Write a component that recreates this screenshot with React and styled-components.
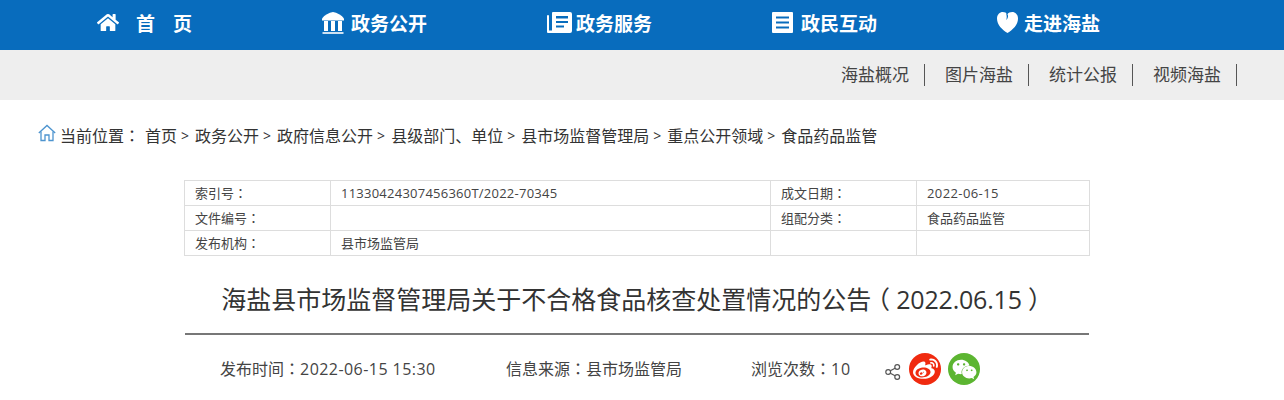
import React from 'react';
import styled, { createGlobalStyle } from 'styled-components';
import { FaHome, FaWeibo, FaWeixin } from 'react-icons/fa';

const FONT = '"Open Sans", "Noto Sans CJK SC", sans-serif';

const GlobalStyle = createGlobalStyle`
  html, body {
    margin: 0;
    padding: 0;
    background: #fff;
    overflow: hidden;
  }
  body {
    font-family: ${FONT};
    color: #333;
  }
`;

const MainNav = styled.nav`
  height: 50px;
  background: #086cbd;
  display: flex;
  padding-left: 97px;
`;

const NavItem = styled.a`
  width: 225px;
  height: 46px;
  display: flex;
  align-items: center;
  color: #fff;
  font-size: 19px;
  font-weight: 700;
`;

const NavIcon = styled.span`
  display: flex;
  width: ${(p) => p.$width}px;
  margin-right: ${(p) => p.$gap}px;
  margin-top: -1px;

  svg {
    display: block;
  }
`;

const HomeLabel = styled.span`
  width: 56px;
  display: flex;
  justify-content: space-between;
`;

const SubNav = styled.div`
  height: 50px;
  background: #eee;
  display: flex;
  justify-content: flex-end;
  align-items: center;
  padding-right: 47px;
`;

const SubLink = styled.a`
  height: 22px;
  line-height: 22px;
  padding: 0 15px 0 20px;
  border-right: 1px solid #555;
  font-size: 17px;
  color: #444;
`;

const Crumbs = styled.div`
  height: 70px;
  padding-bottom: 10px;
  display: flex;
  align-items: center;
  padding-left: 38px;
  font-size: 16px;
  color: #333;
`;

const CrumbHome = styled.svg`
  width: 18px;
  height: 18px;
  margin-right: 4px;
  margin-top: -4px;
`;

const CrumbLabel = styled.span`
  margin-right: 5px;
`;

const CrumbLink = styled.a`
  color: #333;
`;

const CrumbSep = styled.span`
  font-size: 14px;
  margin: 0 6px 0 4px;
`;

// centred full-width punctuation, as the reference's system font draws it
const Punct = styled.span`
  font-family: "Noto Sans CJK TC", sans-serif;
`;

const Num = styled.span`
  letter-spacing: ${(p) => p.$spacing}px;
`;

const Article = styled.main`
  width: 906px;
  margin-left: 184px;
`;

const MetaTable = styled.table`
  width: 905px;
  border-collapse: collapse;
  table-layout: fixed;
  font-size: 13px;
  color: #444;

  td {
    height: 24px;
    padding: 0 0 0 10px;
    border: 1px solid #ddd;
    line-height: 24px;
  }
`;

const Title = styled.h1`
  margin: 0 1px;
  padding: 25px 6px 0 0;
  height: 79px;
  box-sizing: border-box;
  border-bottom: 2px solid #777;
  text-align: center;
  font-size: 25px;
  line-height: 36px;
  font-weight: 400;
  color: #333;
  white-space: nowrap;
`;

// half-width glyph in a full-width box, so the bracket sits in the middle
const TitleParen = styled.span`
  display: inline-block;
  width: 25px;
  text-align: center;
  font-feature-settings: "halt";
`;

const InfoRow = styled.div`
  display: flex;
  align-items: center;
  height: 68px;
  padding-left: 36px;
  font-size: 16px;
  color: #444;
`;

const InfoText = styled.span`
  width: ${(p) => p.$width}px;
  margin-top: -2px;
`;

const ShareGlyph = styled.svg`
  width: 16px;
  height: 16px;
  margin-right: 8px;
  margin-top: 6px;
`;

const Badge = styled.span`
  width: 32px;
  height: 32px;
  border-radius: 50%;
  background: ${(p) => p.$bg};
  margin-right: 7px;
  display: flex;
  align-items: center;
  justify-content: center;
  color: #fff;
  font-size: 25px;
`;

const BankIcon = () => (
  <svg width="22" height="22" viewBox="0 0 22 22" fill="#fff">
    <path d="M11 0 C15 0.5 19.5 3 22 6.5 V8.5 H0 V6.5 C2.5 3 7 0.5 11 0 Z" />
    <rect x="2" y="9" width="4" height="10" />
    <rect x="9" y="9" width="4" height="10" />
    <rect x="16" y="9" width="4" height="10" />
    <rect x="0.5" y="20" width="21" height="2" opacity="0.8" />
  </svg>
);

const ServiceIcon = () => (
  <svg width="25" height="21" viewBox="0 0 25 21" fill="#fff">
    <rect x="0" y="3" width="2" height="18" rx="1" />
    <path
      d="M6 0 H23 Q25 0 25 2 V19 Q25 21 23 21 H1 V18.5 H5 V1 Q5 0 6 0 Z M9 4 V6.5 H21 V4 Z M9 9 V11 H21 V9 Z M9 13.5 V15.5 H17 V13.5 Z"
      fillRule="evenodd"
    />
  </svg>
);

const ListIcon = () => (
  <svg width="21" height="21" viewBox="0 0 21 21" fill="#fff">
    <path d="M1 0 H20 Q21 0 21 1 V20 Q21 21 20 21 H1 Q0 21 0 20 V1 Q0 0 1 0 Z M4 4.5 V6.5 H17 V4.5 Z M4 9.5 V11.5 H17 V9.5 Z M4 14.5 V16.5 H17 V14.5 Z" fillRule="evenodd" />
  </svg>
);

const HeartIcon = () => (
  <svg width="21" height="21" viewBox="0 0 21 21">
    <path fill="#fff" d="M10.5 21 C5 17.5 0 13 0 6.5 C0 2.5 2.8 0 5.8 0 C7.8 0 9.3 0.8 10.2 2.4 C11.4 0.8 13.2 0 15.2 0 C18.2 0 21 2.5 21 6.5 C21 13 16 17.5 10.5 21 Z" />
    <path fill="#086cbd" d="M10.2 2 C11.6 3.6 11.4 6 9.2 8 C10 5.8 9.9 4 9 1 Z" />
  </svg>
);

const crumbs = ['首页', '政务公开', '政府信息公开', '县级部门、单位', '县市场监督管理局', '重点公开领域', '食品药品监管'];

const App = () => (
  <>
    <GlobalStyle />
    <MainNav>
      <NavItem>
        <NavIcon $width={22} $gap={17}><FaHome size={23} color="#fff" /></NavIcon>
        <HomeLabel><span>首</span><span>页</span></HomeLabel>
      </NavItem>
      <NavItem><NavIcon $width={22} $gap={7}><BankIcon /></NavIcon>政务公开</NavItem>
      <NavItem><NavIcon $width={25} $gap={4}><ServiceIcon /></NavIcon>政务服务</NavItem>
      <NavItem><NavIcon $width={21} $gap={8}><ListIcon /></NavIcon>政民互动</NavItem>
      <NavItem><NavIcon $width={21} $gap={6}><HeartIcon /></NavIcon>走进海盐</NavItem>
    </MainNav>
    <SubNav>
      <SubLink>海盐概况</SubLink>
      <SubLink>图片海盐</SubLink>
      <SubLink>统计公报</SubLink>
      <SubLink>视频海盐</SubLink>
    </SubNav>
    <Crumbs>
      <CrumbHome viewBox="0 0 18 18" fill="none" stroke="#4d94cf" strokeWidth="1.3">
        <path d="M0.8 9 L9 1.5 L17.2 9" />
        <path d="M3 7.5 V16.5 H7 V11 H11 V16.5 H15 V7.5" />
      </CrumbHome>
      <CrumbLabel>当前位置<Punct>：</Punct></CrumbLabel>
      {crumbs.map((c, i) => (
        <React.Fragment key={c}>
          <CrumbLink>{c}</CrumbLink>
          {i < crumbs.length - 1 && <CrumbSep>&gt;</CrumbSep>}
        </React.Fragment>
      ))}
    </Crumbs>
    <Article>
      <MetaTable>
        <colgroup>
          <col width="146" />
          <col width="440" />
          <col width="146" />
          <col width="173" />
        </colgroup>
        <tbody>
          <tr>
            <td>索引号<Punct>：</Punct></td>
            <td><Num $spacing={0.24}>11330424307456360T/2022-70345</Num></td>
            <td>成文日期<Punct>：</Punct></td>
            <td><Num $spacing={0.4}>2022-06-15</Num></td>
          </tr>
          <tr>
            <td>文件编号<Punct>：</Punct></td>
            <td></td>
            <td>组配分类<Punct>：</Punct></td>
            <td>食品药品监管</td>
          </tr>
          <tr>
            <td>发布机构<Punct>：</Punct></td>
            <td>县市场监管局</td>
            <td></td>
            <td></td>
          </tr>
        </tbody>
      </MetaTable>
      <Title>
        海盐县市场监督管理局关于不合格食品核查处置情况的公告
        <TitleParen>（</TitleParen>
        <Num $spacing={-0.2}>2022.06.15</Num>
        <TitleParen>）</TitleParen>
      </Title>
      <InfoRow>
        <InfoText $width={286}>发布时间<Punct>：</Punct><Num $spacing={0.45}>2022-06-15 15:30</Num></InfoText>
        <InfoText $width={245}>信息来源<Punct>：</Punct>县市场监管局</InfoText>
        <InfoText $width={134}>浏览次数<Punct>：</Punct><Num $spacing={0.9}>10</Num></InfoText>
        <ShareGlyph viewBox="0 0 16 16" fill="none" stroke="#555" strokeWidth="1.2">
          <circle cx="3.2" cy="8" r="2.4" />
          <circle cx="12.2" cy="3" r="2.4" />
          <circle cx="12.2" cy="13" r="2.4" />
          <path d="M5.3 6.8 L10.1 4.2 M5.3 9.2 L10.1 11.8" />
        </ShareGlyph>
        <Badge $bg="#f02a0f"><FaWeibo /></Badge>
        <Badge $bg="#5cb531"><FaWeixin /></Badge>
      </InfoRow>
    </Article>
  </>
);

export default App;
